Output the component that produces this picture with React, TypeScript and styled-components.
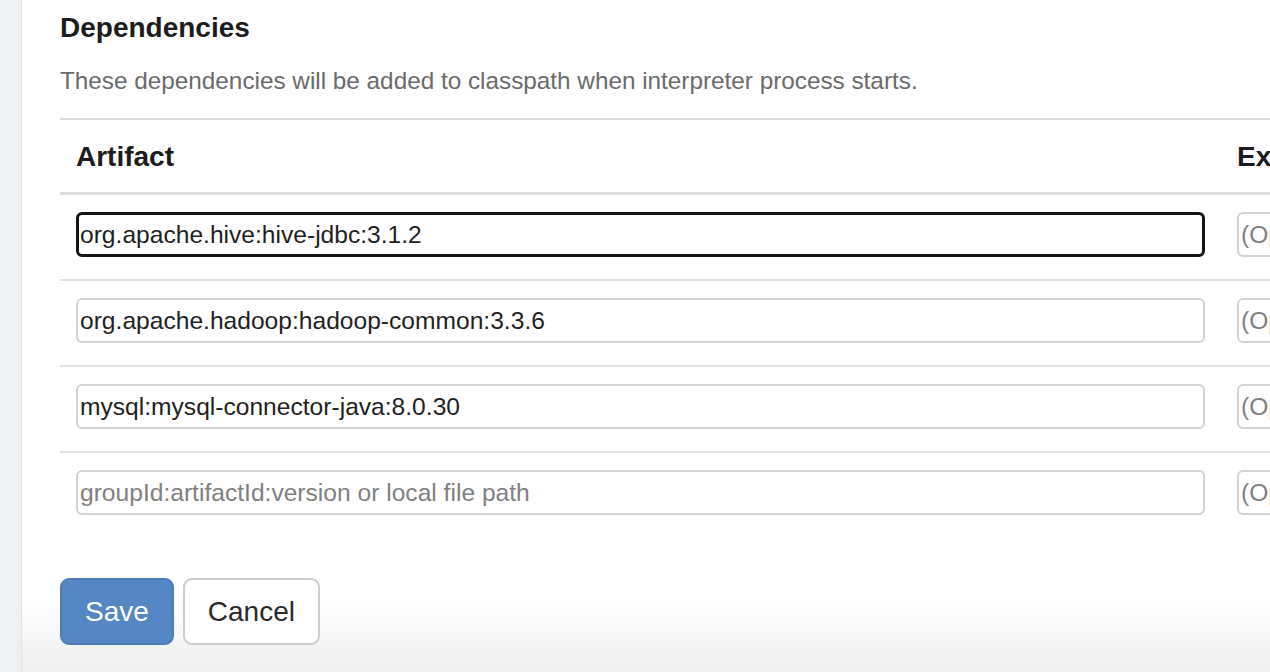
import React from "react";
import styled, { createGlobalStyle } from "styled-components";

const GlobalStyle = createGlobalStyle`
  html, body {
    margin: 0;
    padding: 0;
    height: 672px;
    overflow: hidden;
    background: #ffffff;
  }
  body {
    font-family: "Liberation Sans", Arial, Helvetica, sans-serif;
    color: #333333;
  }
  * { box-sizing: border-box; }
`;

const Page = styled.div`
  display: flex;
  width: 1270px;
  height: 672px;
  overflow: hidden;
`;

const Sidebar = styled.div`
  flex: 0 0 22px;
  background: #eef1f2;
  border-right: 1px solid #e1e4e6;
`;

const Main = styled.main`
  flex: 1;
  min-width: 0;
  overflow: hidden;
  padding: 0 0 0 38px;
  background: linear-gradient(to bottom, #ffffff 0, #ffffff 596px, #eeeeee 672px);
`;

const Heading = styled.h3`
  margin: 13px 0 0;
  font-size: 28px;
  line-height: 1.1;
  font-weight: 700;
  color: #1c1c1c;
`;

const Description = styled.p`
  margin: 20px 0 0;
  font-size: 24.3px;
  line-height: 1.41;
  color: #6b6b6b;
`;

const Table = styled.table`
  margin-top: 20px;
  width: 1560px;
  border-collapse: collapse;
  border-top: 2px solid #dddddd;
  table-layout: fixed;
`;

const HeadCell = styled.th<{ $w: number }>`
  width: ${(p) => p.$w}px;
  text-align: left;
  font-size: 28px;
  line-height: 1.42857;
  font-weight: 700;
  color: #1c1c1c;
  padding: 17px 16px 15px;
  border-bottom: 3px solid #dddddd;
`;

const Row = styled.tr`
  & + & > td {
    border-top: 2px solid #e2e2e2;
  }
`;

const Cell = styled.td`
  padding: 17px 16px 22px;
  vertical-align: top;
`;

const Input = styled.input<{ $focused?: boolean }>`
  display: block;
  width: 100%;
  height: 45px;
  font-family: "Liberation Sans", Arial, Helvetica, sans-serif;
  font-size: 24.6px;
  color: #1f1f1f;
  background: #ffffff;
  border-radius: 6px;
  border: ${(p) => (p.$focused ? "3px solid #141414" : "2px solid #d3d3d3")};
  padding: 0 ${(p) => (p.$focused ? "1px" : "2px")};
  outline: none;
  &::placeholder {
    color: #808080;
  }
`;

const Actions = styled.div`
  display: flex;
  gap: 9px;
  margin-top: 41px;
`;

const Button = styled.button<{ $primary?: boolean }>`
  height: 67px;
  padding: 0 23px;
  font-family: "Liberation Sans", Arial, Helvetica, sans-serif;
  font-size: 28px;
  border-radius: 9px;
  cursor: pointer;
  color: ${(p) => (p.$primary ? "#ffffff" : "#2a2a2a")};
  background: ${(p) => (p.$primary ? "#5487c4" : "#ffffff")};
  border: 2px solid ${(p) => (p.$primary ? "#4b7db9" : "#cccccc")};
`;

const rows = [
  { artifact: "org.apache.hive:hive-jdbc:3.1.2", focused: true },
  { artifact: "org.apache.hadoop:hadoop-common:3.3.6" },
  { artifact: "mysql:mysql-connector-java:8.0.30" },
  { artifact: "" },
];

export default function App() {
  return (
    <>
      <GlobalStyle />
      <Page>
        <Sidebar />
        <Main>
          <Heading>Dependencies</Heading>
          <Description>
            These dependencies will be added to classpath when interpreter process starts.
          </Description>
          <Table>
            <thead>
              <tr>
                <HeadCell $w={1161}>Artifact</HeadCell>
                <HeadCell $w={399}>Exclude</HeadCell>
              </tr>
            </thead>
            <tbody>
              {rows.map((r, i) => (
                <Row key={i}>
                  <Cell>
                    <Input
                      $focused={r.focused}
                      defaultValue={r.artifact}
                      placeholder="groupId:artifactId:version or local file path"
                    />
                  </Cell>
                  <Cell>
                    <Input placeholder="(Optional) comma separated groupId:artifactId list" />
                  </Cell>
                </Row>
              ))}
            </tbody>
          </Table>
          <Actions>
            <Button $primary>Save</Button>
            <Button>Cancel</Button>
          </Actions>
        </Main>
      </Page>
    </>
  );
}
